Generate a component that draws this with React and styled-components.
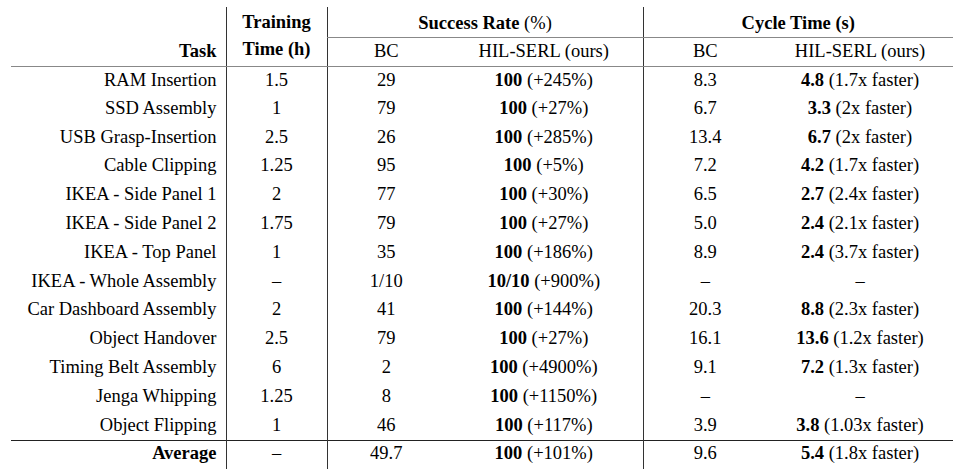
import React from 'react'
import styled, { createGlobalStyle } from 'styled-components'

const Global = createGlobalStyle`
  body {
    margin: 0;
    background: #fff;
  }
`

const Page = styled.div`
  padding: 7px 3px 0 11px;
`

const Table = styled.table`
  border-collapse: collapse;
  table-layout: fixed;
  width: 942px;
  font-family: 'Liberation Serif', 'DejaVu Serif', serif;
  font-size: 18.5px;
  color: #000;
`

const HeadRow = styled.tr`
  height: ${p => p.$h}px;
`

const Th = styled.th`
  font-family: inherit;
  font-size: inherit;
  font-weight: 700;
  text-align: ${p => p.$align || 'center'};
  vertical-align: top;
  padding: ${p => p.$top || 0}px ${p => p.$align === 'right' ? 9 : 0}px 0 0;
  line-height: ${p => p.$lh || 21}px;
  border-left: ${p => p.$divider ? '1.5px solid #333' : 'none'};
  border-bottom: ${p => p.$rule ? '1.5px solid #888' : 'none'};
  white-space: nowrap;
`

const SubTh = styled(Th)`
  font-weight: 400;
  border-bottom: 1.5px solid #888;
`

const Light = styled.span`
  font-weight: 400;
`

const Row = styled.tr`
  height: ${p => p.$total ? 29 : 28.8}px;
  & > td {
    padding-top: ${p => p.$total ? 2 : 3}px;
    border-top: ${p => p.$total ? '1.5px solid #222' : 'none'};
  }
`

const Td = styled.td`
  font-family: inherit;
  font-size: inherit;
  vertical-align: top;
  text-align: ${p => p.$align || 'center'};
  padding-right: ${p => p.$align === 'right' ? 9 : 0}px;
  padding-left: 0;
  padding-bottom: 0;
  border-left: ${p => p.$divider ? '1.5px solid #333' : 'none'};
  font-weight: ${p => p.$bold ? 700 : 400};
  white-space: nowrap;
  line-height: 21px;
`

const B = styled.b`
  font-weight: 700;
`

const rows = [
  ['RAM Insertion', '1.5', '29', '100', '+245%', '8.3', '4.8', '1.7x faster'],
  ['SSD Assembly', '1', '79', '100', '+27%', '6.7', '3.3', '2x faster'],
  ['USB Grasp-Insertion', '2.5', '26', '100', '+285%', '13.4', '6.7', '2x faster'],
  ['Cable Clipping', '1.25', '95', '100', '+5%', '7.2', '4.2', '1.7x faster'],
  ['IKEA - Side Panel 1', '2', '77', '100', '+30%', '6.5', '2.7', '2.4x faster'],
  ['IKEA - Side Panel 2', '1.75', '79', '100', '+27%', '5.0', '2.4', '2.1x faster'],
  ['IKEA - Top Panel', '1', '35', '100', '+186%', '8.9', '2.4', '3.7x faster'],
  ['IKEA - Whole Assembly', '–', '1/10', '10/10', '+900%', '–', null, null],
  ['Car Dashboard Assembly', '2', '41', '100', '+144%', '20.3', '8.8', '2.3x faster'],
  ['Object Handover', '2.5', '79', '100', '+27%', '16.1', '13.6', '1.2x faster'],
  ['Timing Belt Assembly', '6', '2', '100', '+4900%', '9.1', '7.2', '1.3x faster'],
  ['Jenga Whipping', '1.25', '8', '100', '+1150%', '–', null, null],
  ['Object Flipping', '1', '46', '100', '+117%', '3.9', '3.8', '1.03x faster'],
]

const DataRow = ({ r, total }) => (
  <Row $total={total}>
    <Td $align="right" $bold={total}>{r[0]}</Td>
    <Td $divider>{r[1]}</Td>
    <Td $divider>{r[2]}</Td>
    <Td><B>{r[3]}</B> ({r[4]})</Td>
    <Td $divider>{r[5]}</Td>
    <Td>{r[6] ? <><B>{r[6]}</B> ({r[7]})</> : '–'}</Td>
  </Row>
)

export default function App() {
  return (
    <>
      <Global />
      <Page>
        <Table>
          <colgroup>
            <col style={{ width: 215 }} />
            <col style={{ width: 101 }} />
            <col style={{ width: 118 }} />
            <col style={{ width: 198 }} />
            <col style={{ width: 124 }} />
            <col style={{ width: 186 }} />
          </colgroup>
          <thead>
            <HeadRow $h={30}>
              <Th rowSpan={2} $align="right" $top={34} $rule>Task</Th>
              <Th rowSpan={2} $divider $rule $lh={27} $top={2}>Training<br />Time (h)</Th>
              <Th colSpan={2} $divider $rule $top={6}>Success Rate <Light>(%)</Light></Th>
              <Th colSpan={2} $divider $rule $top={6}>Cycle Time (s)</Th>
            </HeadRow>
            <HeadRow $h={29}>
              <SubTh $divider $top={3.5}>BC</SubTh>
              <SubTh $top={3.5}>HIL-SERL (ours)</SubTh>
              <SubTh $divider $top={3.5}>BC</SubTh>
              <SubTh $top={3.5}>HIL-SERL (ours)</SubTh>
            </HeadRow>
          </thead>
          <tbody>
            {rows.map(r => <DataRow key={r[0]} r={r} />)}
            <DataRow total r={['Average', '–', '49.7', '100', '+101%', '9.6', '5.4', '1.8x faster']} />
          </tbody>
        </Table>
      </Page>
    </>
  )
}
